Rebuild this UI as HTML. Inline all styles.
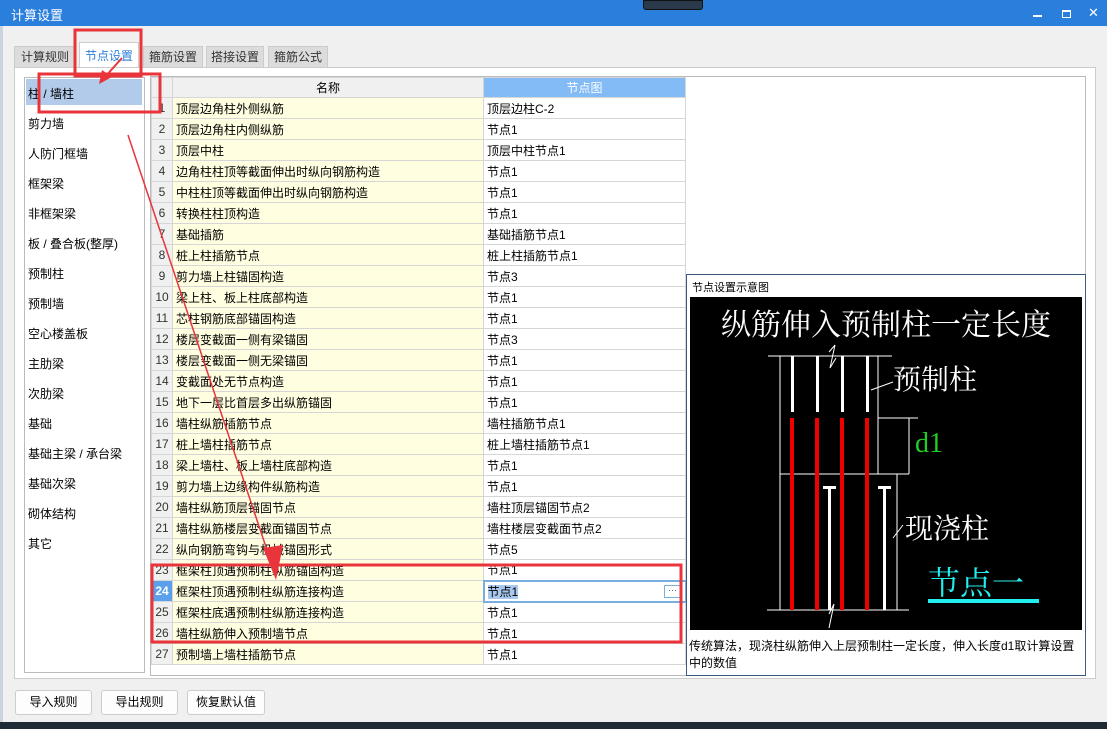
<!DOCTYPE html>
<html><head><meta charset="utf-8"><style>
*{margin:0;padding:0;box-sizing:border-box}
body{width:1107px;height:729px;overflow:hidden;background:#f0f0f0;font-family:"Liberation Sans","Noto Sans CJK SC",sans-serif;font-size:12px;color:#000;position:relative}
.a{position:absolute}
.tb{left:0;top:0;width:1107px;height:26px;background:#2b7fdc;color:#fff;font-size:13px}
.tab{top:46px;height:21px;background:#dcdcdc;border:1px solid #ccc;border-bottom:none;text-align:center;line-height:20px;color:#333}
.li{left:28px;font-size:12px}
table{border-collapse:collapse;position:absolute;left:151px;top:77px;font-size:12px}
td{height:21px;border:1px solid #d6d6d6;padding:0 3px;white-space:nowrap;overflow:hidden}
td.n{width:21px;background:#f0f0f0;text-align:center;padding:0;color:#333}
td.m{width:311px;background:#fffee0}
td.v{width:202px;background:#fff}
.btn{top:690px;height:25px;background:#fdfdfd;border:1px solid #ccc;border-radius:3px;text-align:center;line-height:23px}
</style></head><body>
<div class="a tb"><span class="a" style="left:11px;top:5px">计算设置</span>
<div class="a" style="left:643px;top:0;width:60px;height:10px;background:#2a3a4a;border-radius:0 0 3px 3px;border:1px solid #111"></div>
<div class="a" style="left:1033px;top:15px;width:9px;height:2px;background:#fff"></div>
<div class="a" style="left:1062px;top:10px;width:9px;height:8px;border:2px solid #fff;border-width:2px 1px 1px 1px"></div>
<span class="a" style="left:1088px;top:5px;font-size:13px">✕</span></div>
<div class="a" style="left:0;top:26px;width:3px;height:703px;background:#c8d4e0"></div>
<div class="a tab" style="left:14px;width:62px">计算规则</div>
<div class="a tab" style="left:79px;top:42px;height:26px;width:60px;background:#fff;color:#2b7fdc;line-height:26px">节点设置</div>
<div class="a tab" style="left:143px;width:60px">箍筋设置</div>
<div class="a tab" style="left:206px;width:58px">搭接设置</div>
<div class="a tab" style="left:268px;width:60px">箍筋公式</div>
<div class="a" style="left:14px;top:67px;width:1082px;height:612px;background:#fff;border:1px solid #ccc"></div>
<div class="a" style="left:24px;top:77px;width:121px;height:596px;border:1px solid #bbb;background:#fff"></div>
<div class="a" style="left:26px;top:79px;width:116px;height:26px;background:#b2cbea"></div>
<div class="a li" style="top:85px">柱 / 墙柱</div>
<div class="a li" style="top:115px">剪力墙</div>
<div class="a li" style="top:145px">人防门框墙</div>
<div class="a li" style="top:175px">框架梁</div>
<div class="a li" style="top:205px">非框架梁</div>
<div class="a li" style="top:235px">板 / 叠合板(整厚)</div>
<div class="a li" style="top:265px">预制柱</div>
<div class="a li" style="top:295px">预制墙</div>
<div class="a li" style="top:325px">空心楼盖板</div>
<div class="a li" style="top:355px">主肋梁</div>
<div class="a li" style="top:385px">次肋梁</div>
<div class="a li" style="top:415px">基础</div>
<div class="a li" style="top:445px">基础主梁 / 承台梁</div>
<div class="a li" style="top:475px">基础次梁</div>
<div class="a li" style="top:505px">砌体结构</div>
<div class="a li" style="top:535px">其它</div>
<div class="a" style="left:150px;top:76px;width:936px;height:600px;border:1px solid #bbb;background:#fff"></div>
<table>
<tr><td class="n" style="height:20px"></td><td class="m" style="background:#f0f0f0;text-align:center;height:20px">名称</td><td class="v" style="background:#82bbf5;text-align:center;color:#fff;height:20px">节点图</td></tr>
<tr><td class="n">1</td><td class="m">顶层边角柱外侧纵筋</td><td class="v">顶层边柱C-2</td></tr>
<tr><td class="n">2</td><td class="m">顶层边角柱内侧纵筋</td><td class="v">节点1</td></tr>
<tr><td class="n">3</td><td class="m">顶层中柱</td><td class="v">顶层中柱节点1</td></tr>
<tr><td class="n">4</td><td class="m">边角柱柱顶等截面伸出时纵向钢筋构造</td><td class="v">节点1</td></tr>
<tr><td class="n">5</td><td class="m">中柱柱顶等截面伸出时纵向钢筋构造</td><td class="v">节点1</td></tr>
<tr><td class="n">6</td><td class="m">转换柱柱顶构造</td><td class="v">节点1</td></tr>
<tr><td class="n">7</td><td class="m">基础插筋</td><td class="v">基础插筋节点1</td></tr>
<tr><td class="n">8</td><td class="m">桩上柱插筋节点</td><td class="v">桩上柱插筋节点1</td></tr>
<tr><td class="n">9</td><td class="m">剪力墙上柱锚固构造</td><td class="v">节点3</td></tr>
<tr><td class="n">10</td><td class="m">梁上柱、板上柱底部构造</td><td class="v">节点1</td></tr>
<tr><td class="n">11</td><td class="m">芯柱钢筋底部锚固构造</td><td class="v">节点1</td></tr>
<tr><td class="n">12</td><td class="m">楼层变截面一侧有梁锚固</td><td class="v">节点3</td></tr>
<tr><td class="n">13</td><td class="m">楼层变截面一侧无梁锚固</td><td class="v">节点1</td></tr>
<tr><td class="n">14</td><td class="m">变截面处无节点构造</td><td class="v">节点1</td></tr>
<tr><td class="n">15</td><td class="m">地下一层比首层多出纵筋锚固</td><td class="v">节点1</td></tr>
<tr><td class="n">16</td><td class="m">墙柱纵筋插筋节点</td><td class="v">墙柱插筋节点1</td></tr>
<tr><td class="n">17</td><td class="m">桩上墙柱插筋节点</td><td class="v">桩上墙柱插筋节点1</td></tr>
<tr><td class="n">18</td><td class="m">梁上墙柱、板上墙柱底部构造</td><td class="v">节点1</td></tr>
<tr><td class="n">19</td><td class="m">剪力墙上边缘构件纵筋构造</td><td class="v">节点1</td></tr>
<tr><td class="n">20</td><td class="m">墙柱纵筋顶层锚固节点</td><td class="v">墙柱顶层锚固节点2</td></tr>
<tr><td class="n">21</td><td class="m">墙柱纵筋楼层变截面锚固节点</td><td class="v">墙柱楼层变截面节点2</td></tr>
<tr><td class="n">22</td><td class="m">纵向钢筋弯钩与机械锚固形式</td><td class="v">节点5</td></tr>
<tr><td class="n">23</td><td class="m">框架柱顶遇预制柱纵筋锚固构造</td><td class="v">节点1</td></tr>
<tr><td class="n" style="background:#5aa0ea;color:#fff;font-weight:bold">24</td><td class="m">框架柱顶遇预制柱纵筋连接构造</td><td class="v" style="border:2px solid #7aaee0;position:relative"><span style="background:#a9c8ee">节点1</span><span style="position:absolute;right:3px;top:3px;width:18px;height:13px;border:1px solid #7aaee0;font-size:9px;line-height:9px;text-align:center;color:#357">···</span></td></tr>
<tr><td class="n">25</td><td class="m">框架柱底遇预制柱纵筋连接构造</td><td class="v">节点1</td></tr>
<tr><td class="n">26</td><td class="m">墙柱纵筋伸入预制墙节点</td><td class="v">节点1</td></tr>
<tr><td class="n">27</td><td class="m">预制墙上墙柱插筋节点</td><td class="v">节点1</td></tr>
</table>
<div class="a" style="left:686px;top:274px;width:400px;height:402px;border:1px solid #3a5a80;background:#fff"></div>
<div class="a" style="left:692px;top:279px;font-size:11px">节点设置示意图</div>
<svg class="a" style="left:690px;top:297px" width="392" height="333" viewBox="690 297 392 333">
<rect x="690" y="297" width="392" height="333" fill="#000"/>
<text x="886" y="335" fill="#fff" font-size="30" text-anchor="middle" font-family="Noto Serif CJK SC,serif">纵筋伸入预制柱一定长度</text>
<g stroke="#fff" stroke-width="1" fill="none">
<line x1="768" y1="356" x2="892" y2="356"/><line x1="780" y1="356" x2="780" y2="610"/><line x1="878" y1="356" x2="878" y2="474"/>
<line x1="780" y1="474" x2="909" y2="474"/><line x1="897" y1="474" x2="897" y2="610"/><line x1="767" y1="610" x2="909" y2="610"/>
<line x1="878" y1="418" x2="918" y2="418"/><line x1="909" y1="418" x2="909" y2="474"/>
<polyline points="829,352 835,345 830,368 836,358"/><polyline points="829,614 834,604 829,628"/>
<line x1="871" y1="390" x2="893" y2="382"/><line x1="893" y1="538" x2="903" y2="525"/>
</g>
<g fill="#fff"><rect x="791" y="356" width="3" height="56"/><rect x="816" y="356" width="3" height="56"/><rect x="841" y="356" width="3" height="56"/><rect x="866" y="356" width="3" height="56"/>
<rect x="828" y="486" width="3" height="124"/><rect x="823" y="486" width="13" height="3"/><rect x="883" y="486" width="3" height="124"/><rect x="878" y="486" width="13" height="3"/></g>
<g fill="#e00"><rect x="790" y="418" width="4" height="192"/><rect x="815" y="418" width="4" height="192"/><rect x="840" y="418" width="4" height="192"/><rect x="865" y="418" width="4" height="192"/></g>
<text x="893" y="389" fill="#fff" font-size="28" font-family="Noto Serif CJK SC,serif">预制柱</text>
<text x="905" y="538" fill="#fff" font-size="28" font-family="Noto Serif CJK SC,serif">现浇柱</text>
<text x="915" y="452" fill="#2c2" font-size="28" font-family="Liberation Serif,serif">d1</text>
<text x="928" y="594" fill="#2ee" font-size="32" font-family="Noto Serif CJK SC,serif">节点一</text>
<rect x="928" y="599" width="111" height="4" fill="#2ee"/>
</svg>
<div class="a" style="left:689px;top:638px;width:395px;font-size:12px;line-height:17px">传统算法，现浇柱纵筋伸入上层预制柱一定长度，伸入长度d1取计算设置中的数值</div>
<div class="a btn" style="left:15px;width:77px">导入规则</div>
<div class="a btn" style="left:101px;width:77px">导出规则</div>
<div class="a btn" style="left:187px;width:78px">恢复默认值</div>
<div class="a" style="left:0;top:722px;width:1107px;height:7px;background:#1e2a36"></div>
<svg class="a" style="left:0;top:0" width="1107" height="729">
<g fill="none" stroke="#e8343a" stroke-width="3">
<rect x="75" y="30" width="66" height="46"/><rect x="39" y="74" width="121" height="38"/><rect x="152" y="565" width="529" height="77"/>
</g>
<line x1="122" y1="58" x2="104" y2="78" stroke="#e8343a" stroke-width="2"/>
<polygon points="99,84 102,70 112,77" fill="#e8343a"/>
<line x1="128" y1="135" x2="272" y2="565" stroke="#e8343a" stroke-width="1.5"/>
<polygon points="276,580 263,548 283,545" fill="#e8343a"/>
</svg>
</body></html>
